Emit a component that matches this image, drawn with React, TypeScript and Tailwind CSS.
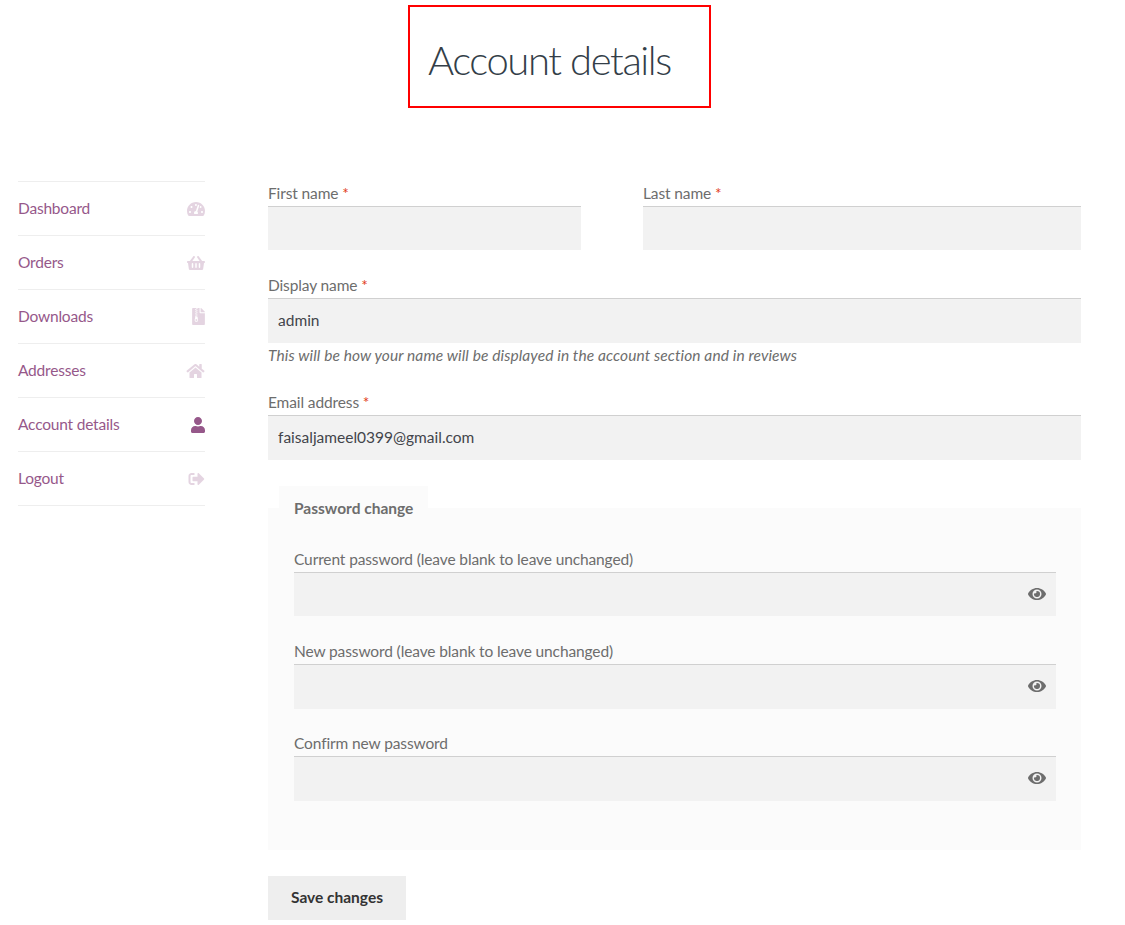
import React from "react";
import { FaTachometerAlt, FaShoppingBasket, FaFileArchive, FaHome, FaUser, FaSignOutAlt, FaEye } from "react-icons/fa";

const nav = [
  { label: "Dashboard", Icon: FaTachometerAlt, size: "w-[18px] h-[16px]" },
  { label: "Orders", Icon: FaShoppingBasket, size: "w-[18px] h-[16px]" },
  { label: "Downloads", Icon: FaFileArchive, size: "w-[13px] h-[17px]" },
  { label: "Addresses", Icon: FaHome, size: "w-[19px] h-[16px]" },
  { label: "Account details", Icon: FaUser, size: "w-[14px] h-[16px]", active: true },
  { label: "Logout", Icon: FaSignOutAlt, size: "w-[17px] h-[16px]" },
];

function Label({ text, required }: { text: string; required?: boolean }) {
  return (
    <label className="block h-[25px] leading-[25px] text-[15.5px] tracking-[-0.12px] text-[#6d6d6d]">
      {text}
      {required && <span className="text-[#e2401c]"> *</span>}
    </label>
  );
}

function Input({ value, h = "h-[45px]" }: { value?: string; h?: string }) {
  return (
    <input
      readOnly
      value={value ?? ""}
      className={`block w-full ${h} bg-[#f2f2f2] border-t border-t-[#d0d0d0] px-[10px] pb-[2px] text-[15.5px] text-[#43454b] outline-none`}
    />
  );
}

function PasswordField({ text, h }: { text: string; h: string }) {
  return (
    <div>
      <Label text={text} />
      <div className="relative">
        <Input h={h} />
        <FaEye className="absolute right-[10px] top-[14px] w-[18px] h-[16px] text-[#6d6d6d]" />
      </div>
    </div>
  );
}

export default function App() {
  return (
    <div className="w-[1125px] h-[925px] bg-white overflow-hidden font-['Lato','Liberation_Sans',sans-serif]">
      <div className="pt-[5px] pl-[408px]">
        <div className="w-[303px] h-[103px] border-2 border-[#ff0000] flex items-center pl-[18px]">
          <h1 className="text-[40px] font-light text-[#333e48] tracking-[-1.4px] leading-none pt-[6px]">Account details</h1>
        </div>
      </div>

      <div className="flex mt-[73px] pl-[18px]">
        <nav className="w-[187px] shrink-0 border-t border-t-[#eeeeee]">
          {nav.map(({ label, Icon, size, active }) => (
            <div key={label} className="h-[54px] border-b border-b-[#eeeeee] flex items-center justify-between text-[15.5px] tracking-[-0.2px] text-[#96588a]">
              <span>{label}</span>
              <Icon className={`${size} ${active ? "" : "opacity-25"}`} />
            </div>
          ))}
        </nav>

        <form className="w-[813px] ml-[63px]">
          <div className="flex gap-[62px]">
            <div className="w-[313px]">
              <Label text="First name" required />
              <Input h="h-[44px]" />
            </div>
            <div className="w-[438px]">
              <Label text="Last name" required />
              <Input h="h-[44px]" />
            </div>
          </div>

          <div className="mt-[23px]">
            <Label text="Display name" required />
            <Input value="admin" />
            <p className="h-[25px] leading-[25px] text-[15.5px] tracking-[0.1px] italic text-[#6d6d6d]">
              This will be how your name will be displayed in the account section and in reviews
            </p>
          </div>

          <div className="mt-[22px]">
            <Label text="Email address" required />
            <Input value="faisaljameel0399@gmail.com" />
          </div>

          <section className="mt-[26px]">
            <div className="relative ml-[11px] w-[149px] h-[44px] pl-[15px] pt-[2px] flex items-center bg-[#fbfbfb] text-[15.5px] font-bold text-[#6d6d6d]">
              Password change
            </div>
            <div className="-mt-[22px] h-[342px] bg-[#fbfbfb] pl-[26px] pr-[25px] pt-[39px]">
              <PasswordField text="Current password (leave blank to leave unchanged)" h="h-[44px]" />
              <div className="mt-[23px]">
                <PasswordField text="New password (leave blank to leave unchanged)" h="h-[45px]" />
              </div>
              <div className="mt-[22px]">
                <PasswordField text="Confirm new password" h="h-[45px]" />
              </div>
            </div>
          </section>

          <button type="button" className="mt-[26px] w-[138px] h-[44px] bg-[#eeeeee] text-[15.5px] font-bold text-[#333333]">
            Save changes
          </button>
        </form>
      </div>
    </div>
  );
}
